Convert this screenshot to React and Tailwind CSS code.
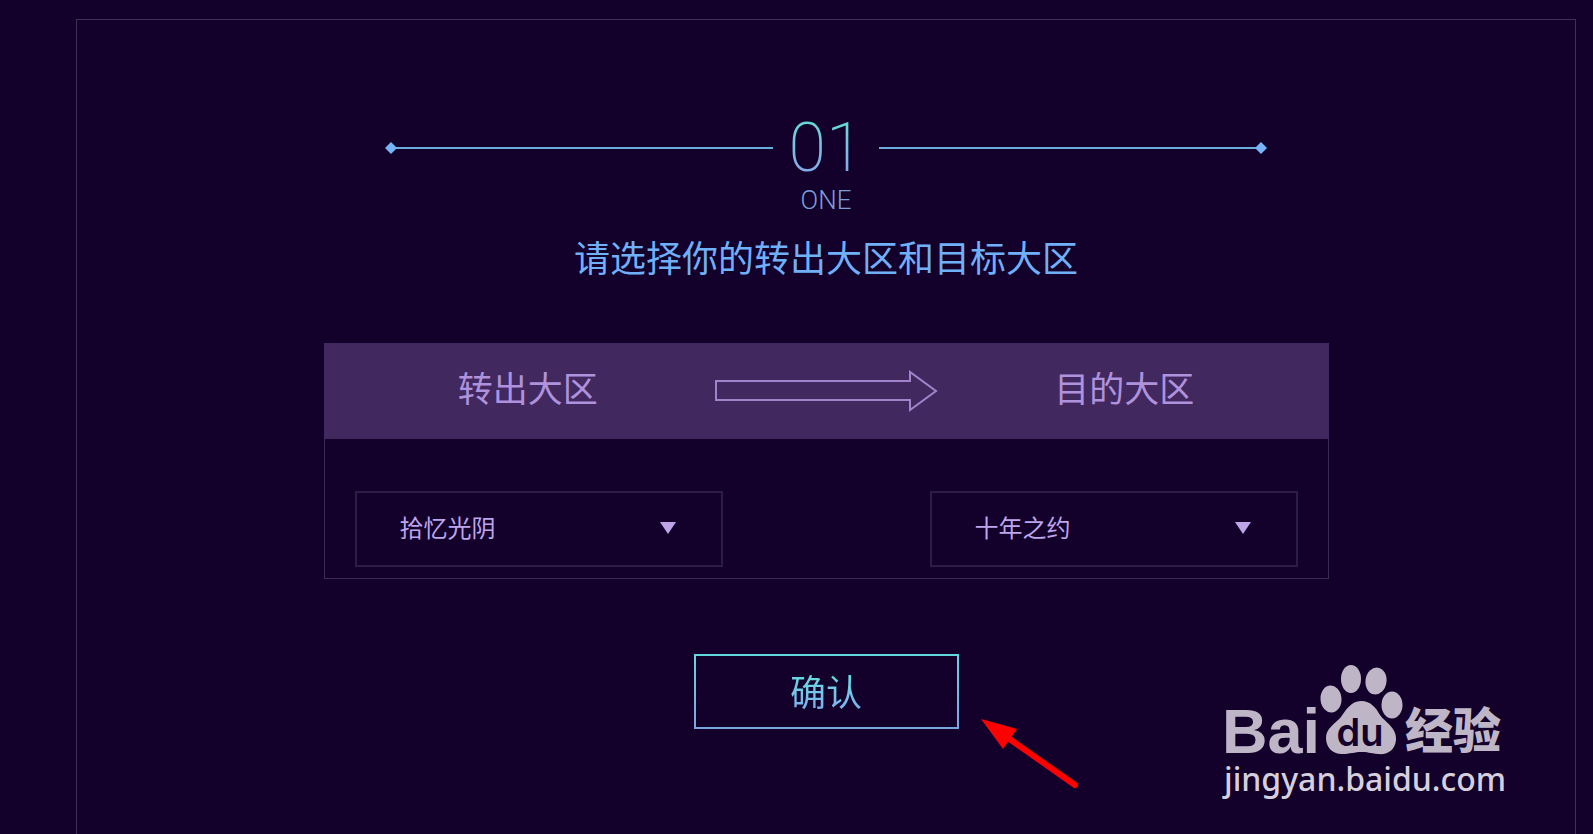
import React, { useState } from 'react';

const OUT_ZONES = ['拾忆光阴', '十年之约'];
const TARGET_ZONES = ['十年之约', '拾忆光阴'];

const ZoneSelect = ({ id, value, options, onChange }) => (
  <div className="relative w-[368px]">
    <select
      id={id}
      value={value}
      onChange={(e) => onChange(e.target.value)}
      className="w-full h-[76px] pl-[43px] pr-16 pb-1 appearance-none bg-transparent border-2 border-[#2e1b47] text-2xl text-[#bda6ec] outline-none cursor-pointer"
    >
      {options.map((name) => (
        <option key={name} value={name} className="bg-[#13002b]">{name}</option>
      ))}
    </select>
    <svg viewBox="0 0 16 12" className="absolute right-[47px] top-[31px] w-4 h-3 pointer-events-none" aria-hidden="true">
      <path d="M0 0H16L8 12Z" fill="#bfa4e8" />
    </svg>
  </div>
);

const Diamond = () => (
  <svg viewBox="0 0 12 12" className="w-3 h-3 -mx-px shrink-0" aria-hidden="true">
    <path d="M6 0L12 6L6 12L0 6Z" fill="#75b5f5" />
  </svg>
);

const Watermark = () => (
  <svg viewBox="0 0 290 140" className="absolute right-[83px] bottom-[30px] w-[290px] h-[140px] pointer-events-none" role="img" aria-label="Baidu 经验">
    <g fill="#beb6c6">
      <text x="2" y="89" fontSize="63" fontWeight="700" fontFamily="Liberation Sans, sans-serif">Bai</text>
      <ellipse cx="111" cy="35" rx="10.500" ry="13.500" transform="rotate(-5 111 35)" />
      <ellipse cx="131" cy="15" rx="10" ry="14" />
      <ellipse cx="156" cy="17" rx="10.500" ry="13.500" transform="rotate(8 156 17)" />
      <ellipse cx="172" cy="41" rx="10.500" ry="13.500" />
      <path d="M141 37C151 37 156 44 160 51C166 59 177 64 176 76C175 86 168 91 158 90C150 89 147 88 141 88C135 88 130 90 122 90C112 90 106 83 106 74C106 64 115 60 121 53C126 46 131 37 141 37Z" />
      <text x="185" y="84" fontSize="48" fontWeight="900" fontFamily="Noto Sans CJK SC, sans-serif">经验</text>
    </g>
    <text x="140" y="82" textAnchor="middle" fontSize="38" fontWeight="600" fontFamily="Inter, sans-serif" fill="#13002b">du</text>
    <text x="4" y="127" fontSize="32" fontWeight="500" fontFamily="Noto Sans, sans-serif" fill="#d6d0dc">jingyan.baidu.com</text>
  </svg>
);

const App = () => {
  const [outZone, setOutZone] = useState('拾忆光阴');
  const [targetZone, setTargetZone] = useState('十年之约');

  return (
    <div className="relative flex w-full min-h-screen bg-[#13002b] pt-[19px] pl-[76px] pr-[17px] font-['Noto_Sans_CJK_SC',sans-serif]">
      <main className="flex-1 border border-b-0 border-[#3f2f58] pt-[100px] flex flex-col items-center">

        {/* 步骤标题 */}
        <div className="w-full max-w-[880px] flex items-center">
          <Diamond />
          <div className="flex-1 h-[2px] bg-[#69aedb]"></div>
          <div className="w-[106px] h-14 leading-14 text-center text-[68px] font-extralight font-['Roboto',sans-serif] bg-linear-to-b from-[#63dcd6] to-[#86a5e8] bg-clip-text text-transparent">
            01
          </div>
          <div className="flex-1 h-[2px] bg-[#69aedb]"></div>
          <Diamond />
        </div>
        <div className="mt-2 text-[26px] leading-8 font-['Roboto',sans-serif] font-light text-[#7b9fd6]">ONE</div>
        <h1 className="mt-4 text-4xl leading-12 text-[#6fb0f8]">请选择你的转出大区和目标大区</h1>

        {/* 大区选择 */}
        <section className="mt-[63px] w-full max-w-[1005px]">
          <div className="h-24 px-[18px] bg-[#41285f] flex items-center text-[35px] leading-12 text-[#af92dc]">
            <label htmlFor="out-zone" className="flex-1 pb-2 text-center">转出大区</label>
            <svg viewBox="0 0 224 42" className="w-[224px] h-[42px] shrink-0" fill="none" stroke="#a183cb" strokeWidth="2" aria-hidden="true">
              <path d="M2 11H196V2L222 21L196 40V30H2Z" />
            </svg>
            <label htmlFor="target-zone" className="flex-1 pb-2 text-center">目的大区</label>
          </div>
          <div className="border border-t-0 border-[#3c2956] px-[30px] pt-[52px] pb-[11px] flex justify-between">
            <ZoneSelect id="out-zone" value={outZone} options={OUT_ZONES} onChange={setOutZone} />
            <ZoneSelect id="target-zone" value={targetZone} options={TARGET_ZONES} onChange={setTargetZone} />
          </div>
        </section>

        {/* 确认 */}
        <div className="relative mt-[75px]">
          <button type="button" className="w-[265px] h-[75px] bg-linear-to-b from-[#62d8dc] to-[#7ba4e0] p-[2px] cursor-pointer">
            <span className="flex w-full h-full pb-1 items-center justify-center bg-[#13002b] text-4xl leading-12">
              <span className="bg-linear-to-b from-[#5ce6d8] to-[#7fabf2] bg-clip-text text-transparent">确认</span>
            </span>
          </button>
          <svg viewBox="0 0 98 70" className="absolute left-[287px] top-[65px] w-[98px] h-[70px]" aria-hidden="true">
            <path d="M27 19L94 66" stroke="#ff0000" strokeWidth="6" strokeLinecap="round" />
            <path d="M0 0L36 10L22 30Z" fill="#ff0000" />
          </svg>
        </div>
      </main>
      <Watermark />
    </div>
  );
};

export default App;
